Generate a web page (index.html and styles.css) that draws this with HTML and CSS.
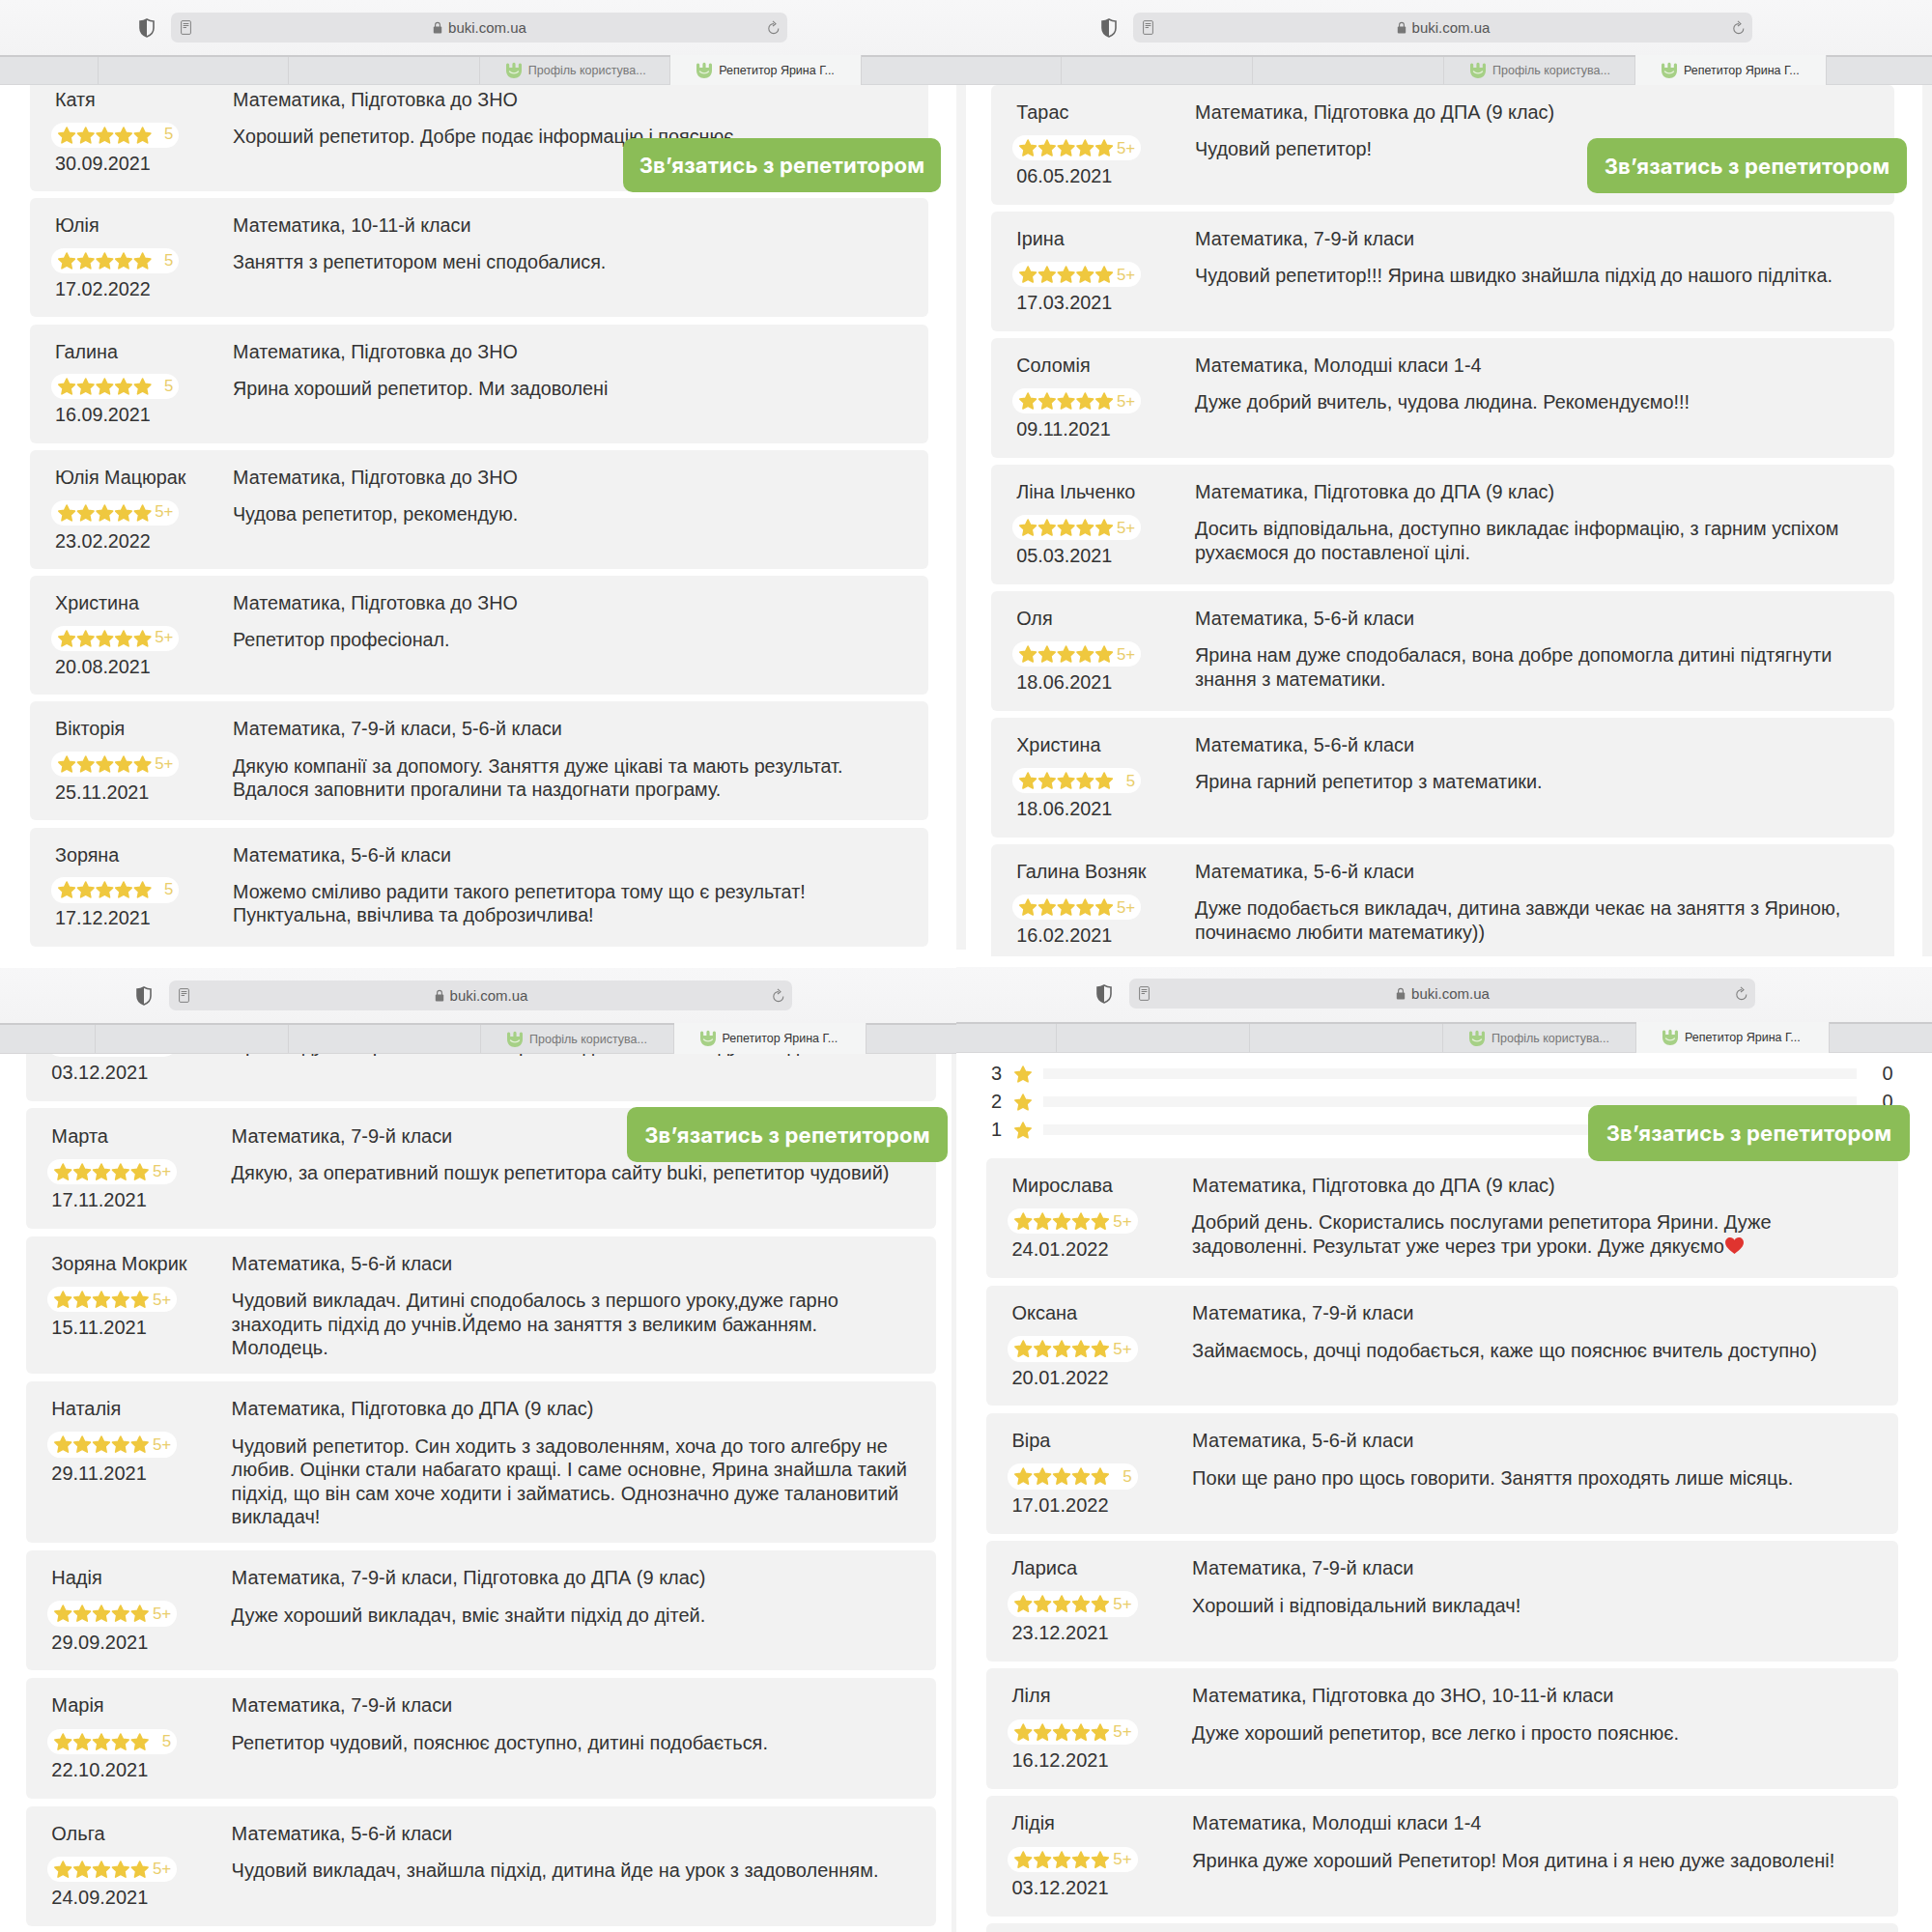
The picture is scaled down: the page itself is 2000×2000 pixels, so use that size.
FILE: index.html
```html
<!DOCTYPE html>
<html lang="uk">
<head>
  <meta charset="UTF-8">
  <title>Репетитор Ярина Г.</title>
  <link rel="stylesheet" href="styles.css">
</head>
<body>
  <svg class="sprites" width="0" height="0">
    <symbol id="star" viewBox="0 0 20 20">
      <polygon points="10,2 12.5,7.2 18.2,8 14,12 15.1,17.8 10,15 4.9,17.8 6,12 1.8,8 7.5,7.2" fill="#efc83f" stroke="#efc83f" stroke-width="1.6" stroke-linejoin="round"/>
    </symbol>
    <symbol id="stars" viewBox="0 0 98 20">
      <use href="#star" x="0" width="20" height="20"/>
      <use href="#star" x="19.5" width="20" height="20"/>
      <use href="#star" x="39" width="20" height="20"/>
      <use href="#star" x="58.5" width="20" height="20"/>
      <use href="#star" x="78" width="20" height="20"/>
    </symbol>
    <symbol id="shield" viewBox="0 0 16 20">
      <path d="M8 1 C10.5 2.4 12.8 3 15 3 V10 C15 14.5 12 17.5 8 19 C4 17.5 1 14.5 1 10 V3 C3.2 3 5.5 2.4 8 1Z" fill="none" stroke="#666" stroke-width="1.6"/>
      <path d="M8 1 C5.5 2.4 3.2 3 1 3 V10 C1 14.5 4 17.5 8 19Z" fill="#666"/>
    </symbol>
    <symbol id="doc" viewBox="0 0 11 15">
      <rect x=".6" y=".6" width="9.8" height="13.8" rx="1.2" fill="none" stroke="#808080" stroke-width="1"/>
      <path d="M2.6 3.5 H8.4 M2.6 5.5 H8.4 M2.6 7.5 H6" stroke="#808080" stroke-width="1"/>
    </symbol>
    <symbol id="lock" viewBox="0 0 10 13">
      <path d="M2.6 6 V3.8 a2.4 2.4 0 0 1 4.8 0 V6" fill="none" stroke="#777" stroke-width="1.1"/>
      <rect x=".8" y="5.6" width="8.4" height="7" rx="1" fill="#777"/>
    </symbol>
    <symbol id="reload" viewBox="0 0 12 16">
      <path d="M6 3.6 A5 5 0 1 0 10.8 8.4" fill="none" stroke="#808080" stroke-width="1.1"/>
      <path d="M5 .8 L8 3.6 L5 6" fill="none" stroke="#808080" stroke-width="1.1"/>
    </symbol>
    <symbol id="buki" viewBox="0 0 18 18">
      <path d="M1 3 a1.6 1.6 0 0 1 3.2 0 V6 H7.4 V2.4 a1.6 1.6 0 0 1 3.2 0 V6 H13.8 V3 a1.6 1.6 0 0 1 3.2 0 V9 C17 14 13.500 17 9 17 S1 14 1 9Z" fill="#a6d086"/>
      <path d="M4.500 10 C6.500 12.500 11.500 12.500 13.500 10" fill="none" stroke="#e4f1d8" stroke-width="1.300" stroke-linecap="round"/>
    </symbol>
  </svg>

  <div class="row row-top">
    <section class="window window-a">
      <div class="toolbar">
        <svg class="shield"><use href="#shield"/></svg>
        <div class="url-bar">
          <svg class="doc"><use href="#doc"/></svg>
          <span class="url"><svg class="lock"><use href="#lock"/></svg>buki.com.ua</span>
          <svg class="reload"><use href="#reload"/></svg>
        </div>
      </div>
      <div class="tabs">
        <div class="tab tab-first"></div>
        <div class="tab"></div>
        <div class="tab"></div>
        <div class="tab"><svg class="tab-icon"><use href="#buki"/></svg>Профіль користува...</div>
        <div class="tab tab-active"><svg class="tab-icon"><use href="#buki"/></svg>Репетитор Ярина Г...</div>
      </div>
      <div class="content">
        <div class="reviews">
          <article class="review">
            <div class="who"><div>Катя</div><div class="rating"><svg class="stars"><use href="#stars"/></svg><span class="score">5</span></div><div>30.09.2021</div></div>
            <div class="what"><div>Математика, Підготовка до ЗНО</div><p>Хороший репетитор. Добре подає інформацію і пояснює.</p></div>
          </article>
          <article class="review">
            <div class="who"><div>Юлія</div><div class="rating"><svg class="stars"><use href="#stars"/></svg><span class="score">5</span></div><div>17.02.2022</div></div>
            <div class="what"><div>Математика, 10-11-й класи</div><p>Заняття з репетитором мені сподобалися.</p></div>
          </article>
          <article class="review">
            <div class="who"><div>Галина</div><div class="rating"><svg class="stars"><use href="#stars"/></svg><span class="score">5</span></div><div>16.09.2021</div></div>
            <div class="what"><div>Математика, Підготовка до ЗНО</div><p>Ярина хороший репетитор. Ми задоволені</p></div>
          </article>
          <article class="review">
            <div class="who"><div>Юлія Мацюрак</div><div class="rating"><svg class="stars"><use href="#stars"/></svg><span class="score">5+</span></div><div>23.02.2022</div></div>
            <div class="what"><div>Математика, Підготовка до ЗНО</div><p>Чудова репетитор, рекомендую.</p></div>
          </article>
          <article class="review">
            <div class="who"><div>Христина</div><div class="rating"><svg class="stars"><use href="#stars"/></svg><span class="score">5+</span></div><div>20.08.2021</div></div>
            <div class="what"><div>Математика, Підготовка до ЗНО</div><p>Репетитор професіонал.</p></div>
          </article>
          <article class="review">
            <div class="who"><div>Вікторія</div><div class="rating"><svg class="stars"><use href="#stars"/></svg><span class="score">5+</span></div><div>25.11.2021</div></div>
            <div class="what"><div>Математика, 7-9-й класи, 5-6-й класи</div><p>Дякую компанії за допомогу. Заняття дуже цікаві та мають результат.<br>Вдалося заповнити прогалини та наздогнати програму.</p></div>
          </article>
          <article class="review">
            <div class="who"><div>Зоряна</div><div class="rating"><svg class="stars"><use href="#stars"/></svg><span class="score">5</span></div><div>17.12.2021</div></div>
            <div class="what"><div>Математика, 5-6-й класи</div><p>Можемо сміливо радити такого репетитора тому що є результат!<br>Пунктуальна, ввічлива та доброзичлива!</p></div>
          </article>
        </div>
      </div>
      <a class="contact">Зв’язатись з репетитором</a>
    </section>

    <section class="window window-b">
      <div class="toolbar">
        <svg class="shield"><use href="#shield"/></svg>
        <div class="url-bar">
          <svg class="doc"><use href="#doc"/></svg>
          <span class="url"><svg class="lock"><use href="#lock"/></svg>buki.com.ua</span>
          <svg class="reload"><use href="#reload"/></svg>
        </div>
      </div>
      <div class="tabs">
        <div class="tab tab-first"></div>
        <div class="tab"></div>
        <div class="tab"></div>
        <div class="tab"><svg class="tab-icon"><use href="#buki"/></svg>Профіль користува...</div>
        <div class="tab tab-active"><svg class="tab-icon"><use href="#buki"/></svg>Репетитор Ярина Г...</div>
      </div>
      <div class="content">
        <div class="reviews">
          <article class="review">
            <div class="who"><div>Тарас</div><div class="rating"><svg class="stars"><use href="#stars"/></svg><span class="score">5+</span></div><div>06.05.2021</div></div>
            <div class="what"><div>Математика, Підготовка до ДПА (9 клас)</div><p>Чудовий репетитор!</p></div>
          </article>
          <article class="review">
            <div class="who"><div>Ірина</div><div class="rating"><svg class="stars"><use href="#stars"/></svg><span class="score">5+</span></div><div>17.03.2021</div></div>
            <div class="what"><div>Математика, 7-9-й класи</div><p>Чудовий репетитор!!! Ярина швидко знайшла підхід до нашого підлітка.</p></div>
          </article>
          <article class="review">
            <div class="who"><div>Соломія</div><div class="rating"><svg class="stars"><use href="#stars"/></svg><span class="score">5+</span></div><div>09.11.2021</div></div>
            <div class="what"><div>Математика, Молодші класи 1-4</div><p>Дуже добрий вчитель, чудова людина. Рекомендуємо!!!</p></div>
          </article>
          <article class="review">
            <div class="who"><div>Ліна Ільченко</div><div class="rating"><svg class="stars"><use href="#stars"/></svg><span class="score">5+</span></div><div>05.03.2021</div></div>
            <div class="what"><div>Математика, Підготовка до ДПА (9 клас)</div><p>Досить відповідальна, доступно викладає інформацію, з гарним успіхом<br>рухаємося до поставленої цілі.</p></div>
          </article>
          <article class="review">
            <div class="who"><div>Оля</div><div class="rating"><svg class="stars"><use href="#stars"/></svg><span class="score">5+</span></div><div>18.06.2021</div></div>
            <div class="what"><div>Математика, 5-6-й класи</div><p>Ярина нам дуже сподобалася, вона добре допомогла дитині підтягнути<br>знання з математики.</p></div>
          </article>
          <article class="review">
            <div class="who"><div>Христина</div><div class="rating"><svg class="stars"><use href="#stars"/></svg><span class="score">5</span></div><div>18.06.2021</div></div>
            <div class="what"><div>Математика, 5-6-й класи</div><p>Ярина гарний репетитор з математики.</p></div>
          </article>
          <article class="review">
            <div class="who"><div>Галина Возняк</div><div class="rating"><svg class="stars"><use href="#stars"/></svg><span class="score">5+</span></div><div>16.02.2021</div></div>
            <div class="what"><div>Математика, 5-6-й класи</div><p>Дуже подобається викладач, дитина завжди чекає на заняття з Яриною,<br>починаємо любити математику))</p></div>
          </article>
        </div>
      </div>
      <a class="contact">Зв’язатись з репетитором</a>
    </section>
  </div>

  <div class="row row-bottom">
    <section class="window window-c">
      <div class="toolbar">
        <svg class="shield"><use href="#shield"/></svg>
        <div class="url-bar">
          <svg class="doc"><use href="#doc"/></svg>
          <span class="url"><svg class="lock"><use href="#lock"/></svg>buki.com.ua</span>
          <svg class="reload"><use href="#reload"/></svg>
        </div>
      </div>
      <div class="tabs">
        <div class="tab tab-first"></div>
        <div class="tab"></div>
        <div class="tab"></div>
        <div class="tab"><svg class="tab-icon"><use href="#buki"/></svg>Профіль користува...</div>
        <div class="tab tab-active"><svg class="tab-icon"><use href="#buki"/></svg>Репетитор Ярина Г...</div>
      </div>
      <div class="content">
        <div class="reviews">
          <article class="review">
            <div class="who"><div>Лідія</div><div class="rating"><svg class="stars"><use href="#stars"/></svg><span class="score">5+</span></div><div>03.12.2021</div></div>
            <div class="what"><div>Математика, Молодші класи 1-4</div><p>Яринка дуже хороший Репетитор! Моя дитина і я нею дуже задоволені!</p></div>
          </article>
          <article class="review">
            <div class="who"><div>Марта</div><div class="rating"><svg class="stars"><use href="#stars"/></svg><span class="score">5+</span></div><div>17.11.2021</div></div>
            <div class="what"><div>Математика, 7-9-й класи</div><p>Дякую, за оперативний пошук репетитора сайту buki, репетитор чудовий)</p></div>
          </article>
          <article class="review">
            <div class="who"><div>Зоряна Мокрик</div><div class="rating"><svg class="stars"><use href="#stars"/></svg><span class="score">5+</span></div><div>15.11.2021</div></div>
            <div class="what"><div>Математика, 5-6-й класи</div><p>Чудовий викладач. Дитині сподобалось з першого уроку,дуже гарно<br>знаходить підхід до учнів.Йдемо на заняття з великим бажанням.<br>Молодець.</p></div>
          </article>
          <article class="review">
            <div class="who"><div>Наталія</div><div class="rating"><svg class="stars"><use href="#stars"/></svg><span class="score">5+</span></div><div>29.11.2021</div></div>
            <div class="what"><div>Математика, Підготовка до ДПА (9 клас)</div><p>Чудовий репетитор. Син ходить з задоволенням, хоча до того алгебру не<br>любив. Оцінки стали набагато кращі. І саме основне, Ярина знайшла такий<br>підхід, що він сам хоче ходити і займатись. Однозначно дуже талановитий<br>викладач!</p></div>
          </article>
          <article class="review">
            <div class="who"><div>Надія</div><div class="rating"><svg class="stars"><use href="#stars"/></svg><span class="score">5+</span></div><div>29.09.2021</div></div>
            <div class="what"><div>Математика, 7-9-й класи, Підготовка до ДПА (9 клас)</div><p>Дуже хороший викладач, вміє знайти підхід до дітей.</p></div>
          </article>
          <article class="review">
            <div class="who"><div>Марія</div><div class="rating"><svg class="stars"><use href="#stars"/></svg><span class="score">5</span></div><div>22.10.2021</div></div>
            <div class="what"><div>Математика, 7-9-й класи</div><p>Репетитор чудовий, пояснює доступно, дитині подобається.</p></div>
          </article>
          <article class="review">
            <div class="who"><div>Ольга</div><div class="rating"><svg class="stars"><use href="#stars"/></svg><span class="score">5+</span></div><div>24.09.2021</div></div>
            <div class="what"><div>Математика, 5-6-й класи</div><p>Чудовий викладач, знайшла підхід, дитина йде на урок з задоволенням.</p></div>
          </article>
        </div>
      </div>
      <a class="contact">Зв’язатись з репетитором</a>
    </section>

    <section class="window window-d">
      <div class="toolbar">
        <svg class="shield"><use href="#shield"/></svg>
        <div class="url-bar">
          <svg class="doc"><use href="#doc"/></svg>
          <span class="url"><svg class="lock"><use href="#lock"/></svg>buki.com.ua</span>
          <svg class="reload"><use href="#reload"/></svg>
        </div>
      </div>
      <div class="tabs">
        <div class="tab tab-first"></div>
        <div class="tab"></div>
        <div class="tab"></div>
        <div class="tab"><svg class="tab-icon"><use href="#buki"/></svg>Профіль користува...</div>
        <div class="tab tab-active"><svg class="tab-icon"><use href="#buki"/></svg>Репетитор Ярина Г...</div>
      </div>
      <div class="content">
        <div class="breakdown">
          <div class="breakdown-row"><span>3</span><svg class="star-one"><use href="#star"/></svg><div class="bar"></div><span class="count">0</span></div>
          <div class="breakdown-row"><span>2</span><svg class="star-one"><use href="#star"/></svg><div class="bar"></div><span class="count">0</span></div>
          <div class="breakdown-row"><span>1</span><svg class="star-one"><use href="#star"/></svg><div class="bar"></div><span class="count">0</span></div>
        </div>
        <div class="reviews">
          <article class="review">
            <div class="who"><div>Мирослава</div><div class="rating"><svg class="stars"><use href="#stars"/></svg><span class="score">5+</span></div><div>24.01.2022</div></div>
            <div class="what"><div>Математика, Підготовка до ДПА (9 клас)</div><p>Добрий день. Скористались послугами репетитора Ярини. Дуже<br>задоволенні. Результат уже через три уроки. Дуже дякуємо<svg class="heart" viewBox="0 0 20 18"><path d="M10 17 C4 12.500 1 9.500 1 5.800 C1 3 3.200 1 5.700 1 C7.500 1 9.100 2 10 3.500 C10.900 2 12.500 1 14.300 1 C16.800 1 19 3 19 5.800 C19 9.500 16 12.500 10 17Z" fill="#e0342f"/></svg></p></div>
          </article>
          <article class="review">
            <div class="who"><div>Оксана</div><div class="rating"><svg class="stars"><use href="#stars"/></svg><span class="score">5+</span></div><div>20.01.2022</div></div>
            <div class="what"><div>Математика, 7-9-й класи</div><p>Займаємось, дочці подобається, каже що пояснює вчитель доступно)</p></div>
          </article>
          <article class="review">
            <div class="who"><div>Віра</div><div class="rating"><svg class="stars"><use href="#stars"/></svg><span class="score">5</span></div><div>17.01.2022</div></div>
            <div class="what"><div>Математика, 5-6-й класи</div><p>Поки ще рано про щось говорити. Заняття проходять лише місяць.</p></div>
          </article>
          <article class="review">
            <div class="who"><div>Лариса</div><div class="rating"><svg class="stars"><use href="#stars"/></svg><span class="score">5+</span></div><div>23.12.2021</div></div>
            <div class="what"><div>Математика, 7-9-й класи</div><p>Хороший і відповідальний викладач!</p></div>
          </article>
          <article class="review">
            <div class="who"><div>Ліля</div><div class="rating"><svg class="stars"><use href="#stars"/></svg><span class="score">5+</span></div><div>16.12.2021</div></div>
            <div class="what"><div>Математика, Підготовка до ЗНО, 10-11-й класи</div><p>Дуже хороший репетитор, все легко і просто пояснює.</p></div>
          </article>
          <article class="review">
            <div class="who"><div>Лідія</div><div class="rating"><svg class="stars"><use href="#stars"/></svg><span class="score">5+</span></div><div>03.12.2021</div></div>
            <div class="what"><div>Математика, Молодші класи 1-4</div><p>Яринка дуже хороший Репетитор! Моя дитина і я нею дуже задоволені!</p></div>
          </article>
          <article class="review"></article>
        </div>
      </div>
      <a class="contact">Зв’язатись з репетитором</a>
    </section>
  </div>
</body>
</html>
```

FILE: styles.css
```css
* {
  margin: 0;
  padding: 0;
  box-sizing: border-box;
}
html, body {
  width: 2000px;
  height: 2000px;
  overflow: hidden;
}
body {
  font-family: "Liberation Sans", Arial, sans-serif;
  background: #fff;
  color: #333;
}
.sprites {
  position: absolute;
}
.row {
  display: flex;
}
.row-top {
  height: 1001px;
}
.row-bottom {
  height: 999px;
}

/* one browser window */
.window {
  position: relative;
  display: flex;
  flex-direction: column;
  overflow: hidden;
}
.toolbar {
  flex: none;
  display: flex;
  align-items: center;
  height: 57px;
  background: linear-gradient(#f7f7f8, #f3f3f4);
}
.shield {
  width: 16px;
  height: 20px;
}
.url-bar {
  display: flex;
  align-items: center;
  justify-content: space-between;
  height: 31px;
  padding: 0 8px 0 10px;
  background: #e3e3e5;
  border-radius: 7px;
}
.doc {
  width: 11px;
  height: 15px;
}
.reload {
  width: 12px;
  height: 16px;
}
.url {
  display: flex;
  align-items: center;
  gap: 6px;
  font-size: 15px;
  color: #555;
}
.lock {
  width: 10px;
  height: 13px;
}
.tabs {
  flex: none;
  display: flex;
  height: 31px;
  background: #e2e3e5;
  border-top: 2px solid #cbcbcd;
  border-bottom: 1px solid #d6d6d8;
}
.tab {
  flex: none;
  display: flex;
  align-items: center;
  gap: 6px;
  padding-left: 26px;
  font-size: 12.500px;
  color: #777;
  border-right: 1px solid #d4d4d6;
  white-space: nowrap;
}
.tab-active {
  margin-top: -2px;
  margin-bottom: -1px;
  background: #f4f5f5;
  color: #333;
}
.tab-icon {
  width: 18px;
  height: 18px;
}

/* scrolled page under the tabs */
.content {
  flex: 1;
  min-height: 0;
  overflow: hidden;
  background: #fff;
}
.reviews {
  display: flex;
  flex-direction: column;
}
.review {
  flex: none;
  display: flex;
  min-height: 6.15em;
  padding: .8em 0 .73em 1.3em;
  background: #f2f2f2;
  border-radius: 6px;
  line-height: 1.25;
}
.who, .what {
  font-size: .987em;
}
.who {
  flex: none;
  width: 9.32em;
}
.what p {
  margin-top: .68em;
  line-height: 1.22;
}
.rating {
  display: flex;
  align-items: center;
  width: 6.7em;
  height: 1.32em;
  margin: .56em 0 .2em -.2em;
  padding: 0 .3em;
  background: #fff;
  border-radius: .66em;
}
.stars {
  flex: none;
  width: 5em;
  height: 1.02em;
}
.score {
  margin-left: auto;
  font-size: .85em;
  color: #e9cd6a;
}
.heart {
  width: 1.05em;
  height: .95em;
  vertical-align: -.12em;
}
.breakdown {
  margin: 7px 0 14.500px 36px;
  font-size: 20px;
}
.breakdown-row {
  display: flex;
  align-items: center;
  height: 29px;
}
.breakdown-row span:first-child {
  width: 23px;
}
.star-one {
  width: 20px;
  height: 20px;
  margin-right: 11px;
}
.bar {
  width: 842px;
  height: 11px;
  background: #f5f5f5;
}
.count {
  width: 64px;
  text-align: center;
}
.contact {
  position: absolute;
  display: flex;
  align-items: center;
  justify-content: center;
  font-family: Inter, "Liberation Sans", sans-serif;
  font-weight: 700;
  font-size: 22px;
  letter-spacing: .2px;
  color: #fff;
  background: #8bbd57;
  border-radius: 10px;
  white-space: nowrap;
}

/* each screenshot was taken at a slightly different scale */
.window-a {
  width: 1000px;
  font-size: 20px;
}
.window-a .shield { margin-left: 144px; }
.window-a .url-bar { width: 638px; margin-left: 17px; }
.window-a .tab { width: 197.400px; }
.window-a .tab-first { width: 102px; }
.window-a .content { flex: none; height: 895px; border-right: 10px solid #f3f3f3; }
.window-a .reviews { width: 961px; margin-top: -13px; padding-left: 31px; gap: 7.300px; }
.window-a .contact { left: 645px; top: 143px; width: 329px; height: 56px; }

.window-b {
  width: 1000px;
  font-size: 20.100px;
}
.window-b .shield { margin-left: 140px; }
.window-b .url-bar { width: 641px; margin-left: 17px; }
.window-b .tab { width: 198px; }
.window-b .tab-first { width: 99px; }
.window-b .content { flex: none; height: 902px; border-right: 10px solid #f3f3f3; }
.window-b .reviews { width: 961px; padding-left: 26px; gap: 7.400px; }
.window-b .contact { left: 643px; top: 143px; width: 331px; height: 57px; }

.window-c {
  width: 990px;
  padding-top: 1px;
  font-size: 20.250px;
}
.window-c .shield { margin-left: 141px; }
.window-c .url-bar { width: 645px; margin-left: 18px; }
.window-c .tabs { height: 32px; }
.window-c .tab { width: 199.500px; }
.window-c .tab-first { width: 99px; }
.window-c .content { border-right: 5px solid #f3f3f3; }
.window-c .reviews { width: 969px; margin-top: -76px; padding-left: 27px; gap: 7.800px; }
.window-c .contact { left: 649px; top: 145px; width: 332px; height: 57px; }

.window-d {
  width: 1010px;
  font-size: 20.300px;
}
.window-d .toolbar { padding-bottom: 2px; }
.window-d .shield { margin-left: 145px; }
.window-d .url-bar { width: 648px; margin-left: 18px; }
.window-d .tabs { height: 32px; }
.window-d .tab { width: 200px; }
.window-d .tab-first { width: 104px; }
.window-d .reviews { width: 975px; padding-left: 31px; gap: 7.300px; }
.window-d .contact { left: 654px; top: 143px; width: 333px; height: 58px; }
```
